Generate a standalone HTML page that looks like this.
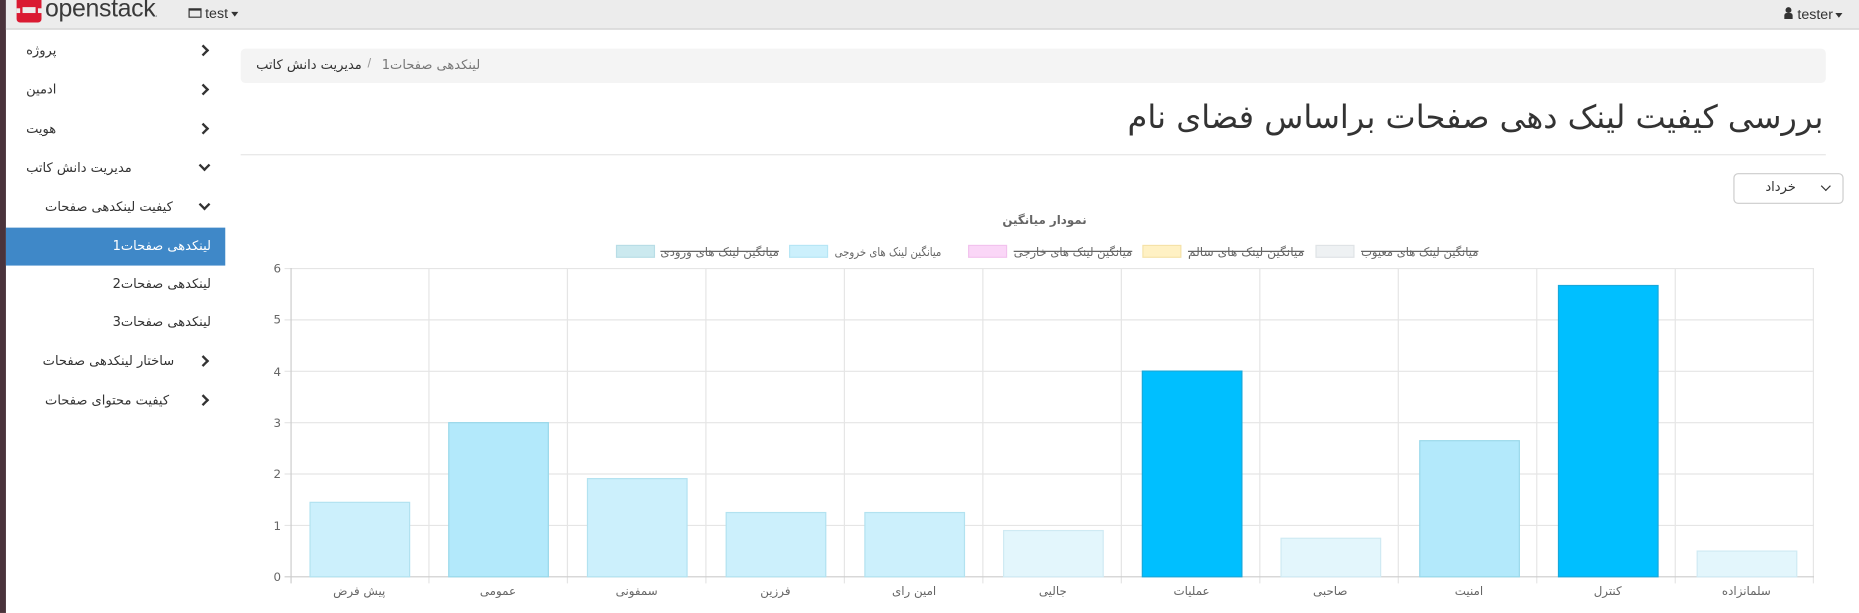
<!DOCTYPE html>
<html><head><meta charset="utf-8">
<style>
*{margin:0;padding:0;box-sizing:border-box}
body{width:1859px;height:613px;overflow:hidden;background:#fff;font-family:"Liberation Sans","DejaVu Sans",sans-serif;position:relative;color:#333}
#w{position:absolute;left:0;top:0;width:1568px;height:517px;transform:scale(1.1856);transform-origin:0 0}
.a{position:absolute;white-space:nowrap}
.fa{font-family:"DejaVu Sans","Liberation Sans",sans-serif}
.side{font-size:11px;color:#333}
.chev{position:absolute;width:7px;height:7px;border-right:2.5px solid #333;border-bottom:2.5px solid #333}
</style></head><body><div id="w">
<div class="a" style="left:0;top:0;width:5px;height:517px;background:#4a333b"></div>
<div class="a" style="left:5px;top:0;width:1563px;height:25px;background:#ececec;border-bottom:1px solid #cfcfcf"></div>
<div class="a" style="left:14px;top:0;width:21px;height:19px;background:#da1a32;border-radius:0 0 3px 3px"></div>
<div class="a" style="left:19px;top:6px;width:11px;height:5px;background:#ececec"></div>
<div class="a" style="left:14px;top:7px;width:3px;height:4px;background:#ececec"></div>
<div class="a" style="left:32px;top:7px;width:3px;height:4px;background:#ececec"></div>
<div class="a" style="left:38px;top:-4px;font-size:21px;color:#3a3a3a;letter-spacing:-0.3px">openstack<span style="font-size:7px">.</span></div>
<div class="a" style="left:159px;top:7px;width:11px;height:8px;border:1.5px solid #333;border-top-width:2.5px"></div>
<div class="a" style="left:173px;top:4px;font-size:12px;color:#333">test</div>
<div class="a" style="left:195px;top:10px;border:3.5px solid transparent;border-top:4px solid #333"></div>
<div class="a" style="left:1505px;top:6px;width:7px;height:10px;"><div style="width:5px;height:5px;border-radius:50%;background:#333;margin-left:1px"></div><div style="width:7px;height:5px;background:#333;border-radius:2px 2px 0 0"></div></div>
<div class="a" style="left:1516px;top:5px;font-size:12px;color:#333">tester</div>
<div class="a" style="left:1548px;top:11px;border:3.5px solid transparent;border-top:4px solid #333"></div>

<div class="a side fa" style="left:22px;top:36px">پروژه</div>
<div class="chev" style="left:168px;top:39px;transform:rotate(-45deg)"></div>
<div class="a side fa" style="left:22px;top:69px">ادمین</div>
<div class="chev" style="left:168px;top:72px;transform:rotate(-45deg)"></div>
<div class="a side fa" style="left:22px;top:102px">هویت</div>
<div class="chev" style="left:168px;top:105px;transform:rotate(-45deg)"></div>
<div class="a side fa" style="left:22px;top:135px">مدیریت دانش کاتب</div>
<div class="chev" style="left:169px;top:136px;transform:rotate(45deg)"></div>
<div class="a side fa" style="left:38px;top:168px">کیفیت لینکدهی صفحات</div>
<div class="chev" style="left:169px;top:169px;transform:rotate(45deg)"></div>
<div class="a" style="left:5px;top:192px;width:185px;height:32px;background:#3f88c8"></div>
<div class="a side fa" style="right:1390px;top:201px;color:#fff">لینکدهی صفحات1</div>
<div class="a side fa" style="right:1390px;top:233px">لینکدهی صفحات2</div>
<div class="a side fa" style="right:1390px;top:265px">لینکدهی صفحات3</div>
<div class="a side fa" style="left:36px;top:298px">ساختار لینکدهی صفحات</div>
<div class="chev" style="left:168px;top:301px;transform:rotate(-45deg)"></div>
<div class="a side fa" style="left:38px;top:331px">کیفیت محتوای صفحات</div>
<div class="chev" style="left:168px;top:334px;transform:rotate(-45deg)"></div>

<div class="a" style="left:203px;top:41px;width:1337px;height:29px;background:#f4f4f4;border-radius:4px"></div>
<div class="a fa" style="left:216px;top:48px;font-size:11px;color:#333">مدیریت دانش کاتب</div>
<div class="a" style="left:310px;top:48px;font-size:11px;color:#999">/</div>
<div class="a fa" style="left:322px;top:48px;font-size:11px;color:#777">لینکدهی صفحات1</div>
<div class="a fa" dir="rtl" style="right:30px;top:84px;font-size:27px;color:#333">بررسی کیفیت لینک دهی صفحات براساس فضای نام</div>
<div class="a" style="left:203px;top:130px;width:1337px;height:1px;background:#e6e6e6"></div>
<div class="a" style="left:1462px;top:146px;width:93px;height:26px;border:1px solid #ccc;border-radius:4px"></div>
<div class="a fa" style="left:1489px;top:151px;font-size:11px">خرداد</div>
<div class="a" style="left:1537px;top:154px;width:6px;height:6px;border-right:1.5px solid #333;border-bottom:1.5px solid #333;transform:rotate(45deg)"></div>

<svg class="a" style="left:0;top:0" width="1568" height="517" font-family="DejaVu Sans, Liberation Sans, sans-serif">
<text x="881" y="189" font-size="10" font-weight="bold" fill="#666" text-anchor="middle">نمودار میانگین</text>
<g font-size="10" fill="#666">
<rect x="520" y="207" width="32" height="10" fill="#cbe9ef" stroke="#b8dde6"/>
<text x="557" y="216" textLength="100" lengthAdjust="spacingAndGlyphs">میانگین لینک های ورودی</text><line x1="557" y1="212" x2="657" y2="212" stroke="#666"/>
<rect x="666" y="207" width="32" height="10" fill="#ccf0fc" stroke="#b6e6f5"/>
<text x="704" y="216" textLength="90" lengthAdjust="spacingAndGlyphs">میانگین لینک های خروجی</text>
<rect x="817" y="207" width="32" height="10" fill="#fad6f7" stroke="#f2c2ee"/>
<text x="855" y="216" textLength="100" lengthAdjust="spacingAndGlyphs">میانگین لینک های خارجی</text><line x1="855" y1="212" x2="955" y2="212" stroke="#666"/>
<rect x="964" y="207" width="32" height="10" fill="#fff1c4" stroke="#f5e2a8"/>
<text x="1002" y="216" textLength="98" lengthAdjust="spacingAndGlyphs">میانگین لینک های سالم</text><line x1="1002" y1="212" x2="1100" y2="212" stroke="#666"/>
<rect x="1110" y="207" width="32" height="10" fill="#eef1f3" stroke="#dfe3e6"/>
<text x="1148" y="216" textLength="99" lengthAdjust="spacingAndGlyphs">میانگین لینک های معیوب</text><line x1="1148" y1="212" x2="1247" y2="212" stroke="#666"/>
</g>
<g stroke="#e5e5e5" stroke-width="1">
<line x1="240" y1="226.5" x2="1530" y2="226.5"/><line x1="240" y1="269.8" x2="1530" y2="269.8"/><line x1="240" y1="313.2" x2="1530" y2="313.2"/><line x1="240" y1="356.5" x2="1530" y2="356.5"/><line x1="240" y1="399.8" x2="1530" y2="399.8"/><line x1="240" y1="443.2" x2="1530" y2="443.2"/>
<line x1="361.8" y1="226" x2="361.8" y2="492"/><line x1="478.6" y1="226" x2="478.6" y2="492"/><line x1="595.4" y1="226" x2="595.4" y2="492"/><line x1="712.2" y1="226" x2="712.2" y2="492"/><line x1="829" y1="226" x2="829" y2="492"/><line x1="945.8" y1="226" x2="945.8" y2="492"/><line x1="1062.6" y1="226" x2="1062.6" y2="492"/><line x1="1179.4" y1="226" x2="1179.4" y2="492"/><line x1="1296.2" y1="226" x2="1296.2" y2="492"/><line x1="1413" y1="226" x2="1413" y2="492"/><line x1="1529.5" y1="226" x2="1529.5" y2="492"/>
</g>
<line x1="245.5" y1="226" x2="245.5" y2="492" stroke="#ccc"/>
<line x1="240" y1="486.5" x2="1530" y2="486.5" stroke="#ccc"/>
<g font-size="10" fill="#666" text-anchor="end">
<text x="237" y="230">6</text><text x="237" y="273">5</text><text x="237" y="317">4</text><text x="237" y="360">3</text><text x="237" y="403">2</text><text x="237" y="447">1</text><text x="237" y="490">0</text>
</g>
<g stroke-width="1">
<rect x="261.5" y="423.7" width="84" height="62.8" fill="#ccf0fc" stroke="#b2e2f0"/>
<rect x="378.5" y="356.5" width="84" height="130" fill="#b3e9fb" stroke="#98d8ea"/>
<rect x="495.5" y="403.7" width="84" height="82.8" fill="#ccf0fc" stroke="#b2e2f0"/>
<rect x="612.5" y="432.3" width="84" height="54.2" fill="#ccf0fc" stroke="#b2e2f0"/>
<rect x="729.5" y="432.3" width="84" height="54.2" fill="#ccf0fc" stroke="#b2e2f0"/>
<rect x="846.5" y="447.5" width="84" height="39" fill="#e3f6fc" stroke="#cfeaf3"/>
<rect x="963.5" y="313" width="84" height="173.5" fill="#00bfff" stroke="#17a8db"/>
<rect x="1080.5" y="454" width="84" height="32.5" fill="#e3f6fc" stroke="#cfeaf3"/>
<rect x="1197.5" y="371.7" width="84" height="114.8" fill="#b3e9fb" stroke="#98d8ea"/>
<rect x="1314.5" y="240.8" width="84" height="245.7" fill="#00bfff" stroke="#17a8db"/>
<rect x="1431.5" y="464.8" width="84" height="21.7" fill="#e3f6fc" stroke="#cfeaf3"/>
</g>
<g font-size="10" fill="#666" text-anchor="middle">
<text x="303" y="502">پیش فرض</text><text x="420" y="502">عمومی</text><text x="537" y="502">سمفونی</text><text x="654" y="502">فرزین</text><text x="771" y="502">امین رای</text><text x="888" y="502">جالیی</text><text x="1005" y="502">عملیات</text><text x="1122" y="502">صاحبی</text><text x="1239" y="502">امنیت</text><text x="1356" y="502">کنترل</text><text x="1473" y="502">سلمانزاده</text>
</g>
</svg>
</div></body></html>
